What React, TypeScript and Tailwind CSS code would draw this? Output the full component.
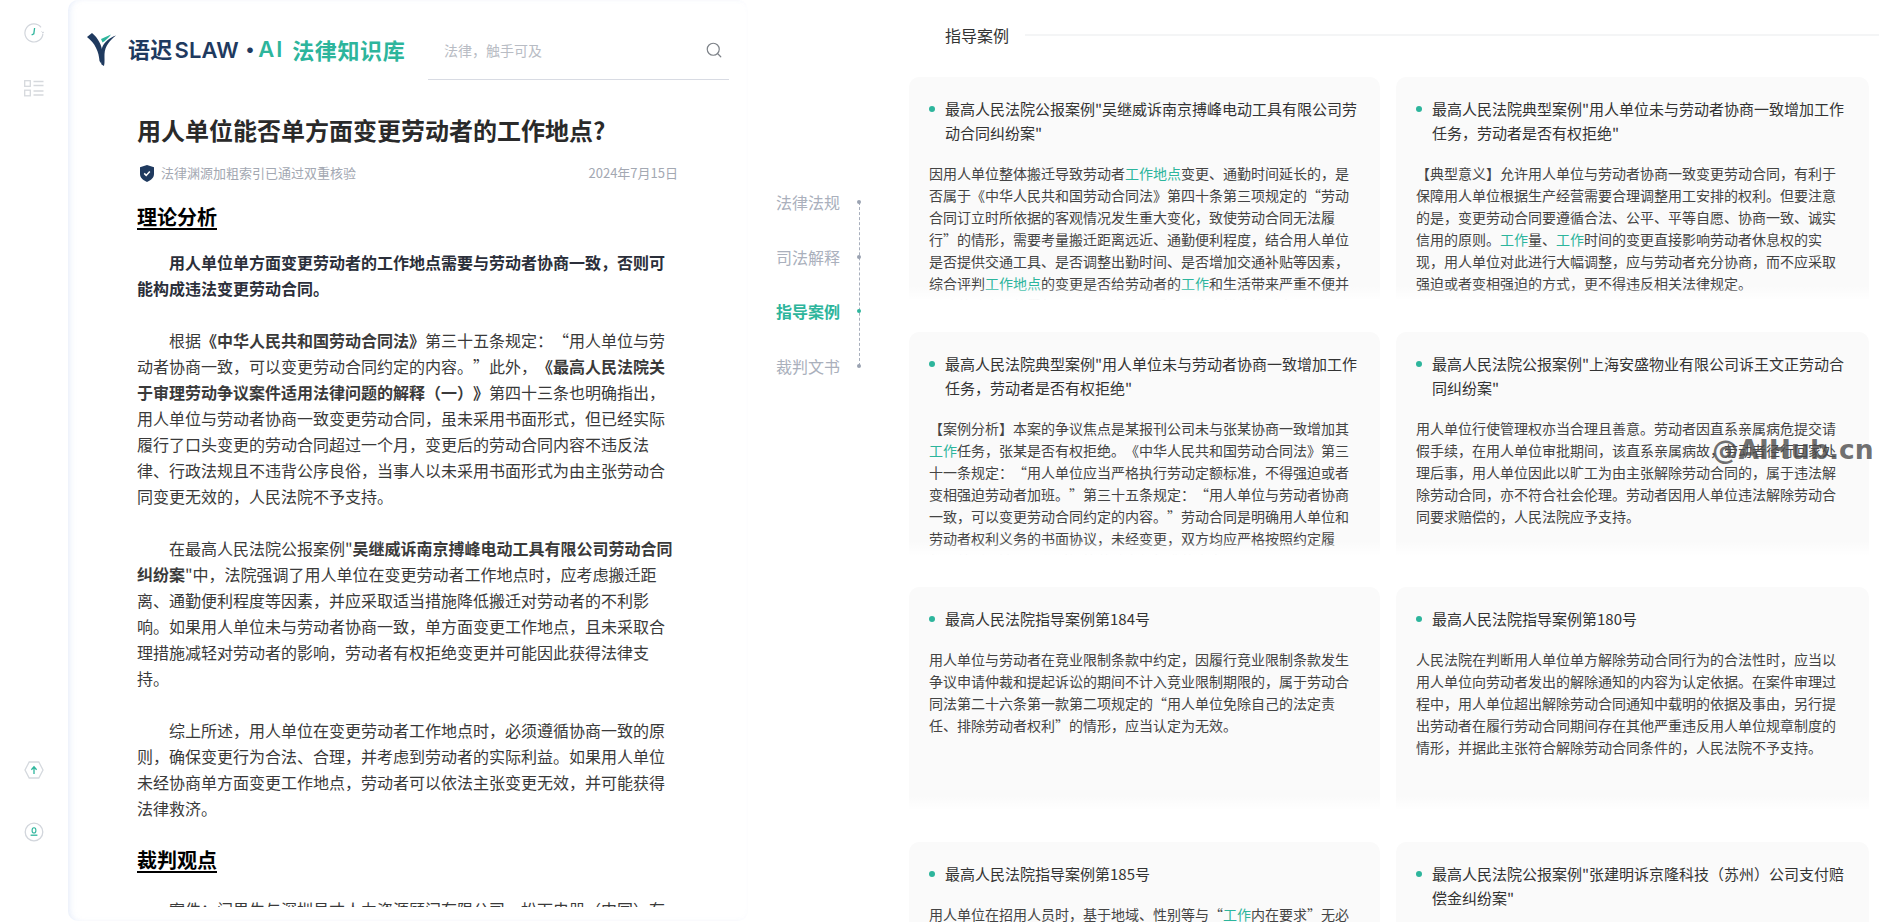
import { Search } from "lucide-react";

interface CaseItem {
  title: string;
  body: string;
}

const cases: CaseItem[] = [
  {
    title: "最高人民法院公报案例\"吴继威诉南京搏峰电动工具有限公司劳动合同纠纷案\"",
    body: "因用人单位整体搬迁导致劳动者工作地点变更、通勤时间延长的，是否属于《中华人民共和国劳动合同法》第四十条第三项规定的“劳动合同订立时所依据的客观情况发生重大变化，致使劳动合同无法履行”的情形，需要考量搬迁距离远近、通勤便利程度，结合用人单位是否提供交通工具、是否调整出勤时间、是否增加交通补贴等因素，综合评判工作地点的变更是否给劳动者的工作和生活带来严重不便并影响劳动合同的履行，用人单位是否采取了合理措施等因素。",
  },
  {
    title: "最高人民法院典型案例\"用人单位未与劳动者协商一致增加工作任务，劳动者是否有权拒绝\"",
    body: "【典型意义】允许用人单位与劳动者协商一致变更劳动合同，有利于保障用人单位根据生产经营需要合理调整用工安排的权利。但要注意的是，变更劳动合同要遵循合法、公平、平等自愿、协商一致、诚实信用的原则。工作量、工作时间的变更直接影响劳动者休息权的实现，用人单位对此进行大幅调整，应与劳动者充分协商，而不应采取强迫或者变相强迫的方式，更不得违反相关法律规定。",
  },
  {
    title: "最高人民法院典型案例\"用人单位未与劳动者协商一致增加工作任务，劳动者是否有权拒绝\"",
    body: "【案例分析】本案的争议焦点是某报刊公司未与张某协商一致增加其工作任务，张某是否有权拒绝。《中华人民共和国劳动合同法》第三十一条规定：“用人单位应当严格执行劳动定额标准，不得强迫或者变相强迫劳动者加班。”第三十五条规定：“用人单位与劳动者协商一致，可以变更劳动合同约定的内容。”劳动合同是明确用人单位和劳动者权利义务的书面协议，未经变更，双方均应严格按照约定履行，特别是涉及工作时间等劳动定额标准的内容。",
  },
  {
    title: "最高人民法院公报案例\"上海安盛物业有限公司诉王文正劳动合同纠纷案\"",
    body: "用人单位行使管理权亦当合理且善意。劳动者因直系亲属病危提交请假手续，在用人单位审批期间，该直系亲属病故，劳动者径行回家处理后事，用人单位因此以旷工为由主张解除劳动合同的，属于违法解除劳动合同，亦不符合社会伦理。劳动者因用人单位违法解除劳动合同要求赔偿的，人民法院应予支持。",
  },
  {
    title: "最高人民法院指导案例第184号",
    body: "用人单位与劳动者在竞业限制条款中约定，因履行竞业限制条款发生争议申请仲裁和提起诉讼的期间不计入竞业限制期限的，属于劳动合同法第二十六条第一款第二项规定的“用人单位免除自己的法定责任、排除劳动者权利”的情形，应当认定为无效。",
  },
  {
    title: "最高人民法院指导案例第180号",
    body: "人民法院在判断用人单位单方解除劳动合同行为的合法性时，应当以用人单位向劳动者发出的解除通知的内容为认定依据。在案件审理过程中，用人单位超出解除劳动合同通知中载明的依据及事由，另行提出劳动者在履行劳动合同期间存在其他严重违反用人单位规章制度的情形，并据此主张符合解除劳动合同条件的，人民法院不予支持。",
  },
  {
    title: "最高人民法院指导案例第185号",
    body: "用人单位在招用人员时，基于地域、性别等与“工作内在要求”无必要关联的因素，对劳动者进行无正当理由的差别对待的，构成就业歧视。",
  },
  {
    title: "最高人民法院公报案例\"张建明诉京隆科技（苏州）公司支付赔偿金纠纷案\"",
    body: "用人单位单方调整劳动者工作岗位的，应当具有合理性。",
  },
];

const navItems = ["法律法规", "司法解释", "指导案例", "裁判文书"];

const Highlighted = ({ text }: { text: string }) => {
  const parts = text.split(/(工作地点|工作)/);
  return (
    <>
      {parts.map((part, i) =>
        part === "工作地点" || part === "工作" ? (
          <span key={i} className="text-[#2db59c]">
            {part}
          </span>
        ) : (
          part
        ),
      )}
    </>
  );
};

const CaseCard = ({ item }: { item: CaseItem }) => {
  return (
    <div className="relative h-[223px] overflow-hidden rounded-t-[10px] bg-[#fafafa] px-5 pt-5">
      <div className="flex items-start gap-2.5">
        <span className="mt-[9px] h-1.5 w-1.5 shrink-0 rounded-full bg-[#2db59c]" />
        <p className="text-[15px] leading-6 text-[#333333]">{item.title}</p>
      </div>
      <p className="mt-[17px] text-[14px] leading-[22px] text-[#444444]">
        <Highlighted text={item.body} />
      </p>
      <div className="absolute inset-x-0 bottom-0 h-[14px] bg-linear-to-b from-white/0 to-white" />
    </div>
  );
};

const Logo = () => (
  <svg width="29" height="33" viewBox="0 0 29 33" className="shrink-0">
    <path d="M0 4 L5 0 C11 5 15 12 15.5 20 L14.5 31 L12.5 28 C12 19 8 10 0 4 Z" fill="#1f3a5f" />
    <path d="M29 2.5 C23 7 18 13 17.5 21 C17.3 25 18 29 17 33 L14.5 31.5 C13.5 25 13.5 20 15 15 C17 9 23 4.5 29 2.5 Z" fill="#1f3a5f" />
    <path d="M14 6 L24 1.5 C21.5 5 18.5 7.5 15.5 9.5 Z" fill="#2db59c" />
  </svg>
);

const ShieldIcon = () => (
  <svg width="14" height="17" viewBox="0 0 14 17" className="shrink-0">
    <path d="M7 0 L14 2.2 V9 C14 12.8 10.8 15.4 7 17 C3.2 15.4 0 12.8 0 9 V2.2 Z" fill="#1f3a5f" />
    <path d="M4.2 8.4 L6.2 10.4 L9.8 6.4" fill="none" stroke="#ffffff" strokeWidth="1.5" />
  </svg>
);

const ClockIcon = () => (
  <svg width="20" height="20" viewBox="0 0 20 20">
    <path d="M18.9 10.6 A9 9 0 1 1 17 4.4" fill="none" stroke="#d2d6dc" strokeWidth="1.2" />
    <path d="M19 10 L17.6 8.4 M19 10 L20 8.6" fill="none" stroke="#d2d6dc" strokeWidth="1" />
    <path d="M10.6 5 L9.8 10.8 L7.6 12" fill="none" stroke="#2db59c" strokeWidth="1.3" />
  </svg>
);

const ListIcon = () => (
  <svg width="20" height="17" viewBox="0 0 20 17" fill="none" stroke="#d6d9dd" strokeWidth="1.3">
    <rect x="0.7" y="0.7" width="5.6" height="5.6" />
    <rect x="0.7" y="10.2" width="5.6" height="5.6" />
    <path d="M9.5 1.5 H19.5 M9.5 5.5 H19.5 M9.5 11 H19.5 M9.5 15 H19.5" />
  </svg>
);

const HexIcon = () => (
  <svg width="20" height="18" viewBox="0 0 20 18">
    <path d="M5.2 1 H14.8 L19 9 L14.8 17 H5.2 L1 9 Z" fill="none" stroke="#d5d9de" strokeWidth="1.3" />
    <path d="M10 13 V6.5 M7.4 8.8 L10 5.8 L12.6 8.8" fill="none" stroke="#2db59c" strokeWidth="1.3" />
  </svg>
);

const UserIcon = () => (
  <svg width="20" height="20" viewBox="0 0 20 20">
    <circle cx="10" cy="10" r="8.8" fill="none" stroke="#d2d6dc" strokeWidth="1.3" />
    <ellipse cx="10" cy="8.4" rx="1.9" ry="2.6" fill="none" stroke="#2db59c" strokeWidth="1.1" />
    <path d="M6.6 13.2 H13.4" stroke="#2db59c" strokeWidth="1.3" />
  </svg>
);

export default function App() {
  return (
    <div className="relative flex h-[922px] w-full overflow-hidden bg-white font-['Noto_Sans_CJK_SC',sans-serif] [text-spacing-trim:space-all]">
      {/* Left rail */}
      <aside className="flex w-[68px] shrink-0 flex-col items-center justify-between pt-[23px] pb-[80px]">
        <div className="flex flex-col items-center gap-[37px]">
          <ClockIcon />
          <ListIcon />
        </div>
        <div className="flex flex-col items-center gap-[43px]">
          <HexIcon />
          <UserIcon />
        </div>
      </aside>

      {/* Article panel */}
      <main className="flex h-[921px] w-[680px] shrink-0 flex-col rounded-[10px] bg-white shadow-[inset_5px_0_6px_-3px_rgba(170,195,240,0.25),inset_0_0_4px_rgba(170,195,240,0.06)]">
        <header className="flex h-[80px] shrink-0 items-end pl-[19px] pr-[19px]">
          <div className="mb-[13px] flex items-center">
            <Logo />
            <span className="ml-[12px] text-[22px] font-bold tracking-[0.2px] whitespace-nowrap text-[#1f3a5f]">
              语迟
              <span className="ml-0.5 font-['Inter',sans-serif] font-semibold">SLAW</span>
              <span className="mr-[-3px]">·</span>
            </span>
            <span className="font-['Inter',sans-serif] text-[22px] font-semibold tracking-[2px] text-[#2db59c]">AI</span>
            <span className="ml-[8px] text-[22px] font-bold tracking-[0.6px] whitespace-nowrap text-[#2db59c]">
              法律知识库
            </span>
          </div>
          <div className="ml-auto flex h-[59px] w-[301px] items-center justify-between border-b border-[#d8dbe3] pl-4 pr-[6px]">
            <span className="text-[14px] text-[#b8bcc4]">法律，触手可及</span>
            <Search className="h-[18px] w-[18px] text-[#7d8288]" strokeWidth={1.6} />
          </div>
        </header>

        <article className="mb-[14px] min-h-0 flex-1 overflow-hidden pl-[69px]">
          <div className="w-[541px]">
            <h1 className="mt-[33px] text-[24px] leading-[34px] font-bold text-[#2a2a2a]">
              用人单位能否单方面变更劳动者的工作地点?
            </h1>
            <div className="mt-4 flex h-5 items-center pl-[3px] text-[13px] text-[#a3a8b2]">
              <ShieldIcon />
              <span className="ml-[7px]">法律渊源加粗索引已通过双重核验</span>
              <span className="ml-auto">2024年7月15日</span>
            </div>

            <h2 className="mt-5 text-[20px] leading-7 font-bold text-black underline underline-offset-[3px]">
              理论分析
            </h2>
            <p className="mt-[18px] indent-8 text-[16px] leading-[26px] font-bold text-[#2b2f3a]">
              用人单位单方面变更劳动者的工作地点需要与劳动者协商一致，否则可能构成违法变更劳动合同。
            </p>
            <p className="mt-[26px] indent-8 text-[16px] leading-[26px] text-[#3a3a3a]">
              根据<b>《中华人民共和国劳动合同法》</b>第三十五条规定：“用人单位与劳动者协商一致，可以变更劳动合同约定的内容。”此外，
              <b>《最高人民法院关于审理劳动争议案件适用法律问题的解释（一）》</b>
              第四十三条也明确指出，用人单位与劳动者协商一致变更劳动合同，虽未采用书面形式，但已经实际履行了口头变更的劳动合同超过一个月，变更后的劳动合同内容不违反法律、行政法规且不违背公序良俗，当事人以未采用书面形式为由主张劳动合同变更无效的，人民法院不予支持。
            </p>
            <p className="mt-[26px] indent-8 text-[16px] leading-[26px] text-[#3a3a3a]">
              在最高人民法院公报案例"<b>吴继威诉南京搏峰电动工具有限公司劳动合同纠纷案</b>
              "中，法院强调了用人单位在变更劳动者工作地点时，应考虑搬迁距离、通勤便利程度等因素，并应采取适当措施降低搬迁对劳动者的不利影响。如果用人单位未与劳动者协商一致，单方面变更工作地点，且未采取合理措施减轻对劳动者的影响，劳动者有权拒绝变更并可能因此获得法律支持。
            </p>
            <p className="mt-[26px] indent-8 text-[16px] leading-[26px] text-[#3a3a3a]">
              综上所述，用人单位在变更劳动者工作地点时，必须遵循协商一致的原则，确保变更行为合法、合理，并考虑到劳动者的实际利益。如果用人单位未经协商单方面变更工作地点，劳动者可以依法主张变更无效，并可能获得法律救济。
            </p>

            <h2 className="mt-[25px] text-[20px] leading-7 font-bold text-black underline underline-offset-[3px]">
              裁判观点
            </h2>
            <p className="mt-[22px] indent-8 text-[16px] leading-[26px] text-[#3a3a3a]">
              案件：闫男生与深圳易才人力资源顾问有限公司、松下电器（中国）有限公司南京分公司劳动合同纠纷案。
            </p>
          </div>
        </article>
      </main>

      {/* Section nav */}
      <nav className="w-[161px] shrink-0 pl-[28px] pt-[191px]">
        <div className="relative flex w-fit flex-col gap-[32.7px]">
          <div className="absolute top-[11px] bottom-[11px] left-[82.5px] border-l border-dashed border-[#a8afbd]" />
          {navItems.map((label) => {
            const active = label === "指导案例";
            return (
              <div key={label} className="flex h-[22px] items-center gap-[17px]">
                <span className={active ? "text-[16px] font-bold text-[#2db59c]" : "text-[16px] text-[#aab0bc]"}>
                  {label}
                </span>
                <span
                  className={
                    active
                      ? "relative h-1 w-1 rounded-full bg-[#2db59c]"
                      : "relative h-1 w-1 rounded-full bg-[#9aa2b1]"
                  }
                />
              </div>
            );
          })}
        </div>
      </nav>

      {/* Cases */}
      <section className="w-[970px] shrink-0">
        <div className="flex h-[47px] items-end pl-9">
          <div className="flex w-full items-center gap-4">
            <span className="text-[16px] leading-6 text-[#333333]">指导案例</span>
            <span className="h-0.5 flex-1 bg-[#f4f5f6]" />
          </div>
        </div>
        <div className="mt-[30px] grid grid-cols-[471px_473px] gap-x-4 gap-y-8">
          {cases.map((item, i) => (
            <CaseCard key={i} item={item} />
          ))}
        </div>
      </section>

      {/* Site watermark burned into the capture */}
      <span className="absolute top-[428px] left-[1712px] font-['DejaVu_Sans',sans-serif] text-[26.5px] leading-[44px] font-bold text-[#4a4a4a]/80">
        @AIHub.cn
      </span>
    </div>
  );
}
